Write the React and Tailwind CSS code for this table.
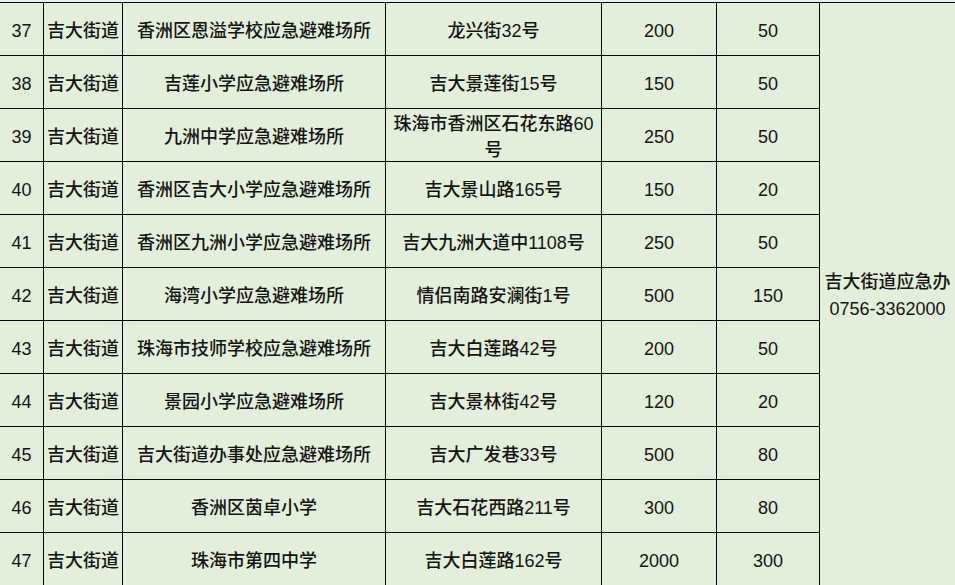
import React from "react";

const rows = [
  ["37", "吉大街道", "香洲区恩溢学校应急避难场所", "龙兴街32号", "200", "50"],
  ["38", "吉大街道", "吉莲小学应急避难场所", "吉大景莲街15号", "150", "50"],
  ["39", "吉大街道", "九洲中学应急避难场所", "珠海市香洲区石花东路60号", "250", "50"],
  ["40", "吉大街道", "香洲区吉大小学应急避难场所", "吉大景山路165号", "150", "20"],
  ["41", "吉大街道", "香洲区九洲小学应急避难场所", "吉大九洲大道中1108号", "250", "50"],
  ["42", "吉大街道", "海湾小学应急避难场所", "情侣南路安澜街1号", "500", "150"],
  ["43", "吉大街道", "珠海市技师学校应急避难场所", "吉大白莲路42号", "200", "50"],
  ["44", "吉大街道", "景园小学应急避难场所", "吉大景林街42号", "120", "20"],
  ["45", "吉大街道", "吉大街道办事处应急避难场所", "吉大广发巷33号", "500", "80"],
  ["46", "吉大街道", "香洲区茵卓小学", "吉大石花西路211号", "300", "80"],
  ["47", "吉大街道", "珠海市第四中学", "吉大白莲路162号", "2000", "300"],
];

function Cell({ children, className = "" }) {
  return (
    <td className={`border border-black text-center align-middle p-0 h-[53px] ${className}`}>
      <div className="translate-y-[2px]">{children}</div>
    </td>
  );
}

export default function App() {
  return (
    <div
      className="w-[955px] h-[585px] overflow-hidden bg-[#e3eedb] text-[#151515] text-[18px] leading-[26px]"
      style={{ fontFamily: '"Liberation Sans", "Noto Sans CJK SC", sans-serif' }}
    >
      <div className="h-[2px] bg-[#eef0f7]" />
      <table className="w-[955px] table-fixed border-collapse">
        <colgroup>
          <col className="w-[43.5px]" />
          <col className="w-[79px]" />
          <col className="w-[263px]" />
          <col className="w-[216px]" />
          <col className="w-[115px]" />
          <col className="w-[103px]" />
          <col className="w-[135.5px]" />
        </colgroup>
        <tbody>
          {rows.map((r, i) => (
            <tr key={r[0]}>
              <Cell className="border-l-0">{r[0]}</Cell>
              <Cell className="font-medium">{r[1]}</Cell>
              <Cell className="font-medium">{r[2]}</Cell>
              <Cell className="font-medium px-[6px]">{r[3]}</Cell>
              <Cell>{r[4]}</Cell>
              <Cell>{r[5]}</Cell>
              {i === 0 && (
                <td rowSpan={rows.length} className="border border-black border-r-0 text-center align-middle p-0">
                  <div className="translate-y-[2px] leading-[27px]">
                    <div className="font-medium">吉大街道应急办</div>
                    <div>0756-3362000</div>
                  </div>
                </td>
              )}
            </tr>
          ))}
        </tbody>
      </table>
    </div>
  );
}
